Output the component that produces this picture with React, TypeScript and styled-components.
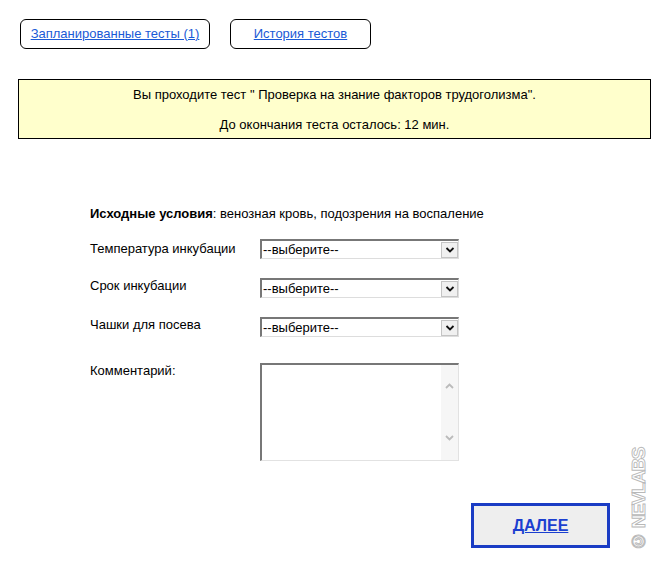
import React from "react";
import styled, { createGlobalStyle } from "styled-components";

const Global = createGlobalStyle`
  html, body { margin: 0; padding: 0; background: #ffffff; }
  body {
    font-family: "Liberation Sans", Arial, sans-serif;
    font-size: 13px;
    line-height: 16px;
    color: #000;
  }
`;

const Page = styled.div`
  position: relative;
  width: 669px;
  height: 567px;
  box-sizing: border-box;
  padding: 19px 18px 0 18px;
`;

const Nav = styled.nav`
  display: flex;
  gap: 20px;
  padding-left: 2px;
`;

const NavButton = styled.div<{ $w: number }>`
  width: ${(p) => p.$w}px;
  height: 30px;
  box-sizing: border-box;
  border: 1px solid #000;
  border-radius: 6px;
  display: flex;
  align-items: center;
  justify-content: center;
`;

const NavLink = styled.a`
  color: #1a5ad6;
  text-decoration: underline;
  cursor: pointer;
`;

const InfoBox = styled.div`
  margin-top: 30px;
  width: 633px;
  box-sizing: border-box;
  border: 1px solid #000;
  background: #ffffcc;
  padding: 7px 0 5px;
  display: flex;
  flex-direction: column;
  gap: 14px;
  text-align: center;
`;

const Form = styled.div`
  margin-top: 67px;
  padding-left: 72px;
`;

const Intro = styled.div`
  margin-bottom: 17px;
  b { font-weight: bold; }
`;

const Grid = styled.div`
  display: grid;
  grid-template-columns: 170px 199px;
  row-gap: 19px;
  align-items: center;
`;

const Label = styled.div<{ $top?: boolean; $lift?: number }>`
  align-self: ${(p) => (p.$top ? "start" : "center")};
  margin-top: ${(p) => (p.$top ? "7px" : "0")};
  position: relative;
  top: ${(p) => -(p.$lift ?? 0)}px;
`;

const SelectBox = styled.div`
  height: 20px;
  box-sizing: border-box;
  border-top: 2px solid #777;
  border-left: 2px solid #777;
  border-right: 1px solid #ddd;
  border-bottom: 1px solid #ddd;
  background: #fff;
  display: flex;
  align-items: center;
`;

const SelectText = styled.div`
  flex: 1;
  padding-left: 1px;
  font-size: 13px;
  line-height: 16px;
`;

const ArrowBox = styled.div`
  width: 17px;
  height: 16px;
  box-sizing: border-box;
  border: 1px solid #c4c4c4;
  background: #f0f0f0;
  display: flex;
  align-items: center;
  justify-content: center;
`;

const AreaBox = styled.div`
  margin-top: 7px;
  height: 98px;
  box-sizing: border-box;
  border-top: 2px solid #777;
  border-left: 2px solid #777;
  border-right: 1px solid #e2e2e2;
  border-bottom: 1px solid #e2e2e2;
  display: flex;
  background: #fff;
`;

const AreaInput = styled.textarea`
  flex: 1;
  border: none;
  outline: none;
  resize: none;
  padding: 0;
  margin: 0;
  background: transparent;
  font-family: inherit;
`;

const ScrollCol = styled.div`
  width: 17px;
  background: #f6f6f6;
  display: flex;
  flex-direction: column;
  justify-content: space-between;
  align-items: center;
  padding: 18px 0 19px;
`;

const Footer = styled.div`
  margin-top: 42px;
  padding-left: 453px;
`;

const NextButton = styled.div`
  width: 139px;
  height: 45px;
  box-sizing: border-box;
  border: 3px solid #1a3cc4;
  background: #eeeeee;
  display: flex;
  align-items: center;
  justify-content: center;
`;

const NextLink = styled.a`
  color: #1b3fd0;
  font-weight: bold;
  font-size: 16px;
  text-decoration: underline;
  cursor: pointer;
`;

const Watermark = styled.div`
  position: absolute;
  left: 629px;
  top: 448px;
  writing-mode: vertical-rl;
  transform: rotate(180deg);
  font-family: "Liberation Sans", Arial, sans-serif;
  font-weight: bold;
  font-size: 19px;
  letter-spacing: -1.5px;
  line-height: 20px;
  color: transparent;
  -webkit-text-stroke: 0.9px #b8b8b8;
  user-select: none;
`;

const Chevron = ({ color, up, w = 9 }: { color: string; up?: boolean; w?: number }) => (
  <svg width={w} height={6} viewBox="0 0 9 6">
    <path
      d={up ? "M1 5 L4.5 1.5 L8 5" : "M1 1 L4.5 4.5 L8 1"}
      fill="none"
      stroke={color}
      strokeWidth={1.8}
    />
  </svg>
);

const FakeSelect = () => (
  <SelectBox>
    <SelectText>--выберите--</SelectText>
    <ArrowBox>
      <Chevron color="#111" w={10} />
    </ArrowBox>
  </SelectBox>
);

export default function App() {
  return (
    <>
      <Global />
      <Page>
        <Nav>
          <NavButton $w={190}>
            <NavLink>Запланированные тесты (1)</NavLink>
          </NavButton>
          <NavButton $w={141}>
            <NavLink>История тестов</NavLink>
          </NavButton>
        </Nav>

        <InfoBox>
          <div>Вы проходите тест " Проверка на знание факторов трудоголизма".</div>
          <div>До окончания теста осталось: 12 мин.</div>
        </InfoBox>

        <Form>
          <Intro>
            <b>Исходные условия</b>: венозная кровь, подозрения на воспаление
          </Intro>
          <Grid>
            <Label>Температура инкубации</Label>
            <FakeSelect />
            <Label $lift={2}>Срок инкубации</Label>
            <FakeSelect />
            <Label $lift={2}>Чашки для посева</Label>
            <FakeSelect />
            <Label $top>Комментарий:</Label>
            <AreaBox>
              <AreaInput />
              <ScrollCol>
                <Chevron color="#bbb" up w={11} />
                <Chevron color="#bbb" w={11} />
              </ScrollCol>
            </AreaBox>
          </Grid>
        </Form>

        <Footer>
          <NextButton>
            <NextLink>ДАЛЕЕ</NextLink>
          </NextButton>
        </Footer>

        <Watermark>© NEVLABS</Watermark>
      </Page>
    </>
  );
}
